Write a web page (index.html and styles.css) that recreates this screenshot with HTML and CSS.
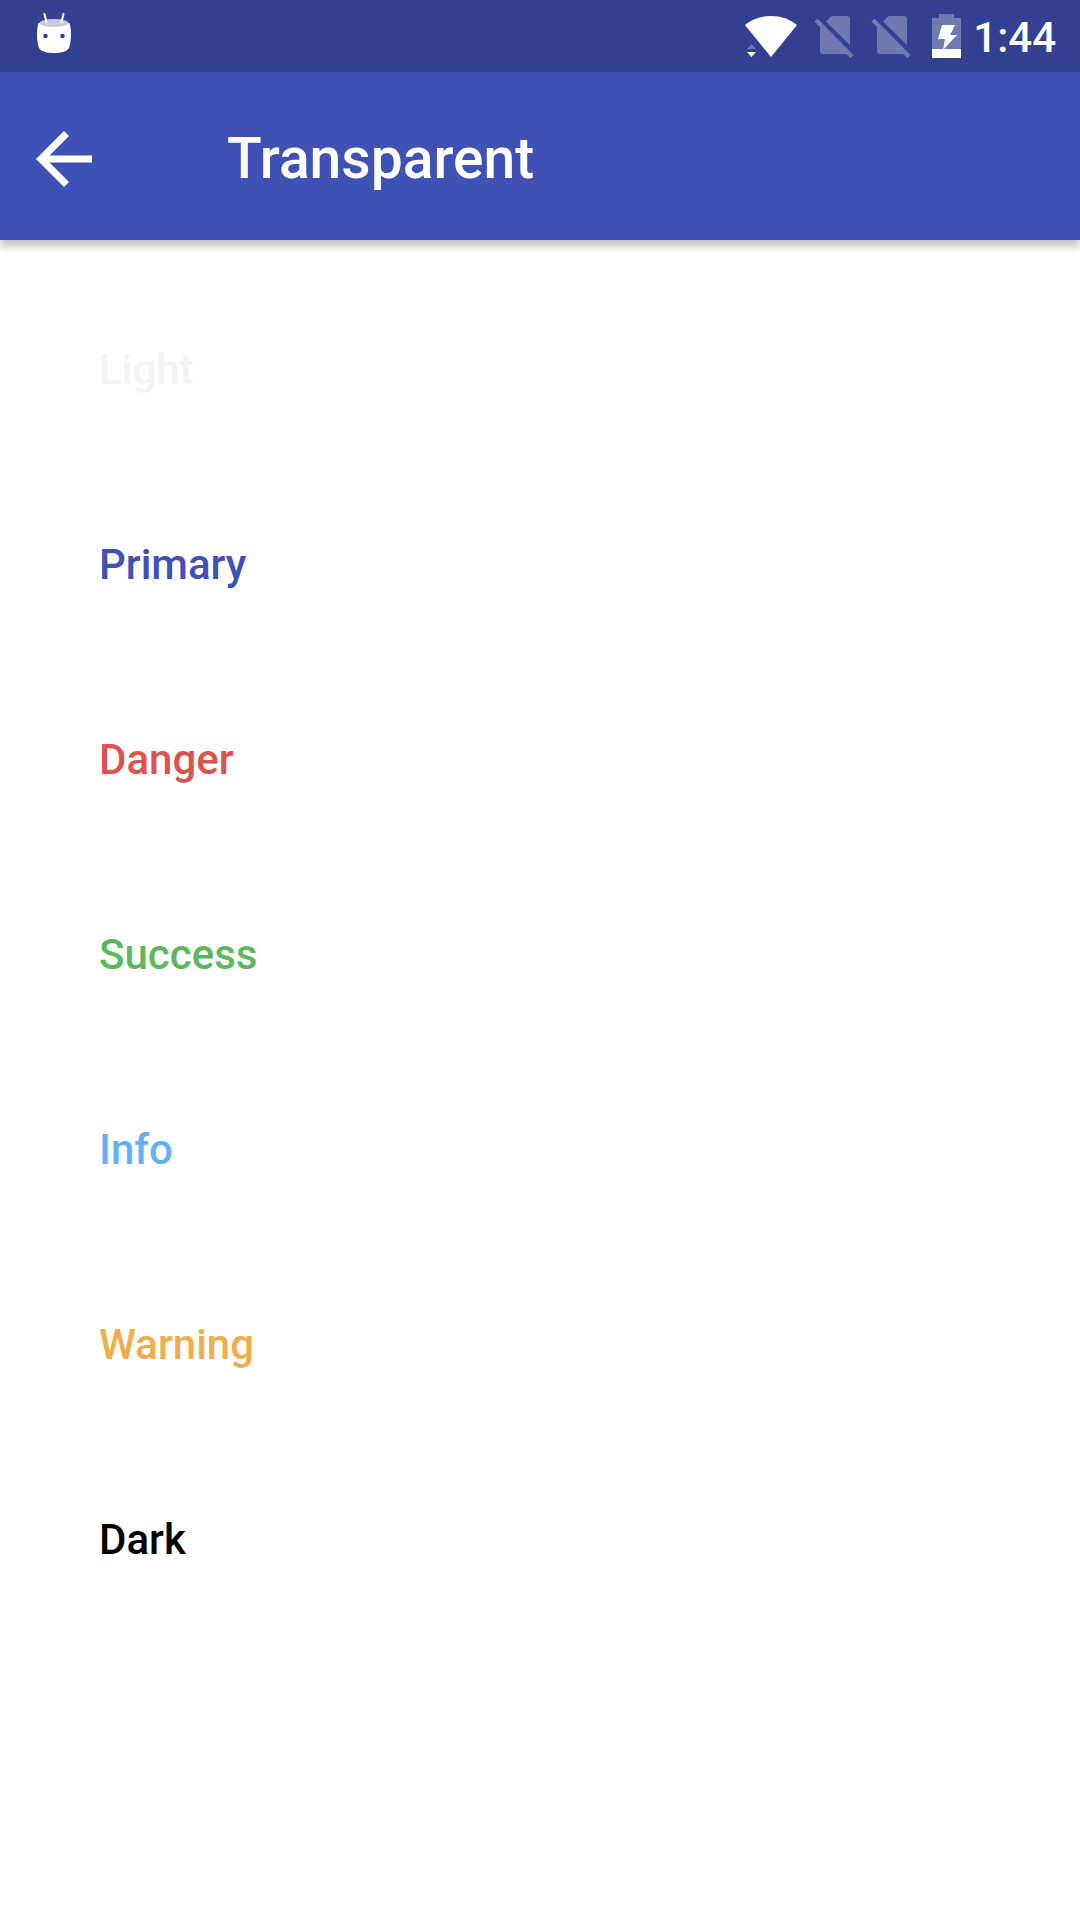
FILE: index.html
```html
<!DOCTYPE html>
<html lang="en">
<head>
<meta charset="utf-8">
<meta name="viewport" content="width=device-width, initial-scale=1">
<title>Transparent</title>
<link rel="stylesheet" href="styles.css">
</head>
<body>
<div class="status-bar">
  <svg class="icon" width="36" height="52" viewBox="0 0 36 52" aria-hidden="true">
    <path d="M2.500 13C0 21 1 32 3 38C5 42 12 43 18 43S31 42 33 38C35 32 36 21 33.500 13Z" transform="translate(0 0)" fill="#fff"/>
    <ellipse cx="18" cy="13" rx="14.500" ry="4" fill="#c8cbe0"/>
    <path d="M8.500 4l2 8M27.500 4l-2 8" stroke="#fff" stroke-width="2" stroke-linecap="round"/>
    <circle cx="9.500" cy="26" r="2.300" fill="#334092"/>
    <circle cx="26.500" cy="26" r="2.300" fill="#334092"/>
  </svg>
  <div class="status-icons">
    <svg class="icon" width="52" height="44" viewBox="0 0 52 44" aria-hidden="true">
      <path d="M0 11Q11 2 26 2T52 11L26 43Z" fill="#fff"/>
      <path d="M2 35L6.500 30L11 35Z" fill="#7179b1"/>
      <path d="M2 38H11L6.500 43Z" fill="#fff"/>
    </svg>
    <svg class="icon sim" width="40" height="44" viewBox="0 0 40 44" aria-hidden="true">
      <path d="M12 7.500L17 2.500Q18 2 19 2H33Q36 2 36 5V31ZM.5 7.500L3.500 4.500L39.500 41L36.500 44L33 40.500Q32 40 31 40H9Q6 40 6 37V13Z" fill="#7179b1"/>
    </svg>
    <svg class="icon sim" width="40" height="44" viewBox="0 0 40 44" aria-hidden="true">
      <path d="M12 7.500L17 2.500Q18 2 19 2H33Q36 2 36 5V31ZM.5 7.500L3.500 4.500L39.500 41L36.500 44L33 40.500Q32 40 31 40H9Q6 40 6 37V13Z" fill="#7179b1"/>
    </svg>
    <svg class="icon battery" width="29" height="44" viewBox="0 0 29 44" aria-hidden="true">
      <path d="M0 4H7V0H22V4H29V35H0Z" fill="#7179b1"/>
      <path d="M0 35H29V44H0Z" fill="#fff"/>
      <path d="M10 11H23L18 21H25L11 36L13 25H6Z" fill="#fff"/>
    </svg>
    <span class="clock">1:44</span>
  </div>
</div>
<header class="app-bar">
  <button class="back" type="button" aria-label="Back">
    <svg class="icon" width="56" height="56" viewBox="0 0 56 56" aria-hidden="true">
      <path d="M56 24.500V31.500H13.500L33 51L28 56L0 28L28 0L33 5L13.500 24.500Z" fill="#fff"/>
    </svg>
  </button>
  <h1 class="title">Transparent</h1>
</header>
<main class="content">
  <button class="btn light" type="button">Light</button>
  <button class="btn primary" type="button">Primary</button>
  <button class="btn danger" type="button">Danger</button>
  <button class="btn success" type="button">Success</button>
  <button class="btn info" type="button">Info</button>
  <button class="btn warning" type="button">Warning</button>
  <button class="btn dark" type="button">Dark</button>
</main>
</body>
</html>
```
FILE: styles.css
```css
* {
  box-sizing: border-box;
}

body {
  margin: 0;
  min-height: 100vh;
  background: #fff;
  font-family: Roboto, "Liberation Sans", sans-serif;
}

.icon {
  display: block;
  flex: none;
  fill: none;
}

.status-bar {
  display: flex;
  align-items: center;
  justify-content: space-between;
  height: 72px;
  padding: 0 24px 0 36px;
  background: #334092;
  color: #fff;
}

.status-icons {
  display: flex;
  align-items: center;
}

.sim {
  margin-left: 17px;
}

.battery {
  margin-left: 21px;
}

.clock {
  padding-top: 3px;
  margin-left: 12px;
  font-size: 42px;
  line-height: 48px;
  font-weight: 500;
}

.app-bar {
  display: flex;
  align-items: center;
  gap: 107px;
  height: 168px;
  padding: 6px 8px 0;
  background: #3f51b5;
  color: #fff;
  box-shadow: 0 6px 8px rgba(0, 0, 0, 0.25);
}

.back {
  padding: 28px;
  border: 0;
  background: none;
}

.title {
  margin: 0;
  font-size: 57px;
  line-height: 72px;
  font-weight: 500;
}

.content {
  display: flex;
  flex-direction: column;
  align-items: flex-start;
  gap: 60px;
  padding: 62px 51px;
}

.btn {
  height: 135px;
  padding: 0 48px;
  border: 0;
  background: transparent;
  font-family: inherit;
  font-size: 42px;
  line-height: 48px;
  font-weight: 500;
}

.light { color: #f4f4f4; }
.primary { color: #3f51b5; }
.danger { color: #d9534f; }
.success { color: #5cb85c; }
.info { color: #62b1f6; }
.warning { color: #f0ad4e; }
.dark { color: #000; }
```
